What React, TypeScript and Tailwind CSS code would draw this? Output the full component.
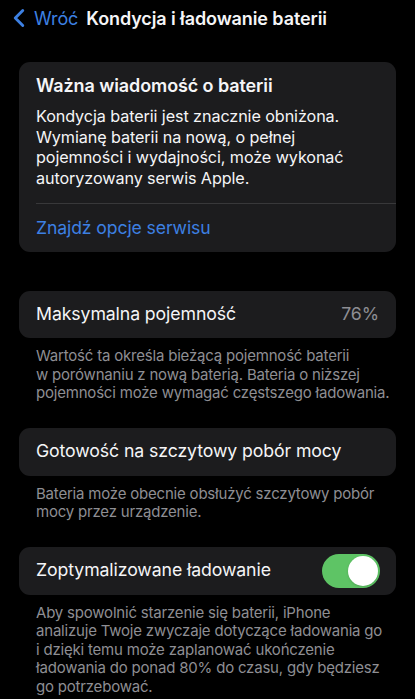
import { ChevronLeft } from 'lucide-react'

function Footer({ children }: { children: React.ReactNode }) {
  return (
    <p className="pl-[17px] pt-[9px] text-[15px] leading-[18.5px] tracking-[-0.2px] text-[#8e8e93]">{children}</p>
  )
}

export default function App() {
  return (
    <div className="min-h-screen bg-black text-[#f5f5f7] font-['Inter','Noto_Sans',sans-serif] tracking-[-0.1px]">
      <div className="flex h-[36px] items-center pl-[4px]">
        <ChevronLeft className="h-[30px] w-[30px] text-[#3d80e3]" strokeWidth={2.3} />
        <span className="text-[18px] text-[#3d80e3]">Wróć</span>
        <span className="ml-[8px] text-[18px] font-semibold">Kondycja i ładowanie baterii</span>
      </div>

      <div className="px-[19px] pt-[26px]">
        <div className="rounded-[11px] bg-[#1c1c1e] pl-[17px]">
          <div className="pr-[16px] pt-[12px] pb-[15px]">
            <div className="text-[18px] font-semibold leading-[24px]">Ważna wiadomość o baterii</div>
            <p className="mt-[8px] text-[16.2px] leading-[20.5px]">
              Kondycja baterii jest znacznie obniżona. Wymianę baterii na nową, o pełnej pojemności i wydajności, może wykonać autoryzowany serwis Apple.
            </p>
          </div>
          <div className="h-px bg-[#38383a]" />
          <div className="flex h-[48px] items-center text-[17.6px] text-[#3d80e3]">Znajdź opcje serwisu</div>
        </div>

        <div className="mt-[39px] flex h-[47px] items-center justify-between rounded-[11px] bg-[#1c1c1e] px-[17px] text-[17.7px]">
          <span>Maksymalna pojemność</span>
          <span className="text-[#8e8e93]">76%</span>
        </div>
        <Footer>
          Wartość ta określa bieżącą pojemność baterii w&nbsp;porównaniu z nową baterią. Bateria o niższej pojemności może wymagać częstszego ładowania.
        </Footer>

        <div className="mt-[25px] flex h-[48px] items-center rounded-[11px] bg-[#1c1c1e] px-[17px] text-[17.7px]">
          Gotowość na szczytowy pobór mocy
        </div>
        <Footer>Bateria może obecnie obsłużyć szczytowy pobór mocy przez urządzenie.</Footer>

        <div className="mt-[25px] flex h-[48px] items-center justify-between rounded-[11px] bg-[#1c1c1e] pl-[17px] pr-[16px] text-[17.7px]">
          <span>Zoptymalizowane ładowanie</span>
          <div className="flex h-[34px] w-[58px] items-center justify-end rounded-full bg-[#5ec465] p-[2px]">
            <div className="h-[30px] w-[30px] rounded-full bg-white shadow" />
          </div>
        </div>
        <Footer>
          Aby spowolnić starzenie się baterii, iPhone
          <br />
          analizuje Twoje zwyczaje dotyczące ładowania go
          <br />
          i dzięki temu może zaplanować ukończenie
          <br />
          ładowania do ponad 80% do czasu, gdy będziesz
          <br />
          go potrzebować.
        </Footer>
      </div>
    </div>
  )
}
